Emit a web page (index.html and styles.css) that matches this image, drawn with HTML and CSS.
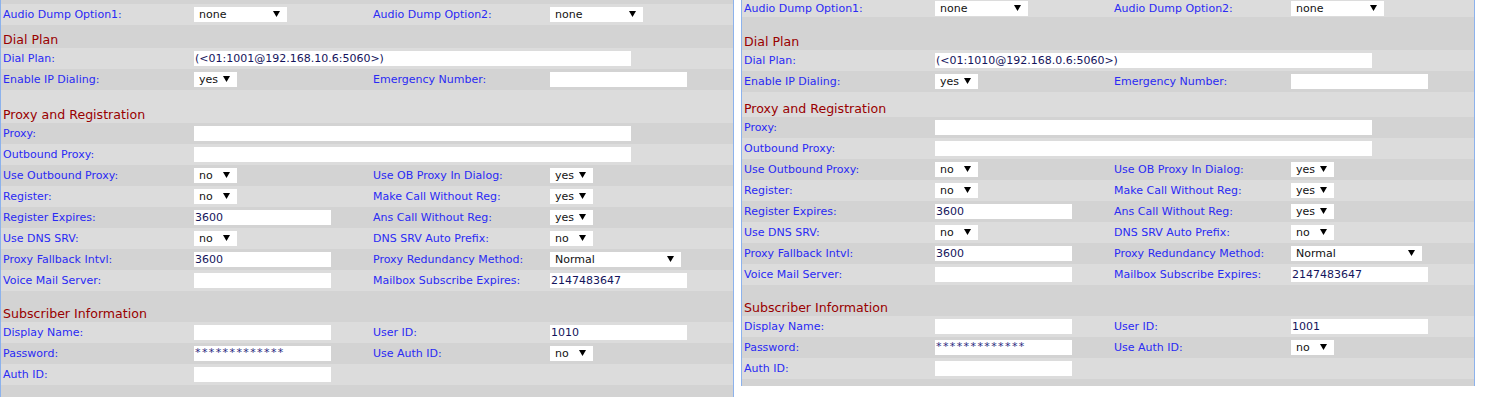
FILE: index.html
```html
<!DOCTYPE html>
<html>
<head>
<meta charset="utf-8">
<title>Ext</title>
<link rel="stylesheet" href="styles.css">
</head>
<body>
<div class="wrap">
  <!-- LEFT PANEL -->
  <div class="panel panel-left">
    <div class="row dark"></div>
    <div class="row light">
      <span class="lbl lbl1">Audio Dump Option1:</span>
      <span class="ctl"><span class="sel w93"><span>none</span><svg class="arr" viewBox="0 0 7 6"><polygon points="0,0 7,0 3.5,6"/></svg></span></span>
      <span class="lbl">Audio Dump Option2:</span>
      <span class="ctl"><span class="sel w93"><span>none</span><svg class="arr" viewBox="0 0 7 6"><polygon points="0,0 7,0 3.5,6"/></svg></span></span>
    </div>
    <div class="sect dark"><div class="hdr">Dial Plan</div></div>
    <div class="row light">
      <span class="lbl lbl1">Dial Plan:</span>
      <span class="ctl span3"><span class="inp wide">(&lt;01:1001@192.168.10.6:5060&gt;)</span></span>
    </div>
    <div class="row dark">
      <span class="lbl lbl1">Enable IP Dialing:</span>
      <span class="ctl"><span class="sel w43"><span>yes</span><svg class="arr" viewBox="0 0 7 6"><polygon points="0,0 7,0 3.5,6"/></svg></span></span>
      <span class="lbl">Emergency Number:</span>
      <span class="ctl"><span class="inp"></span></span>
    </div>
    <div class="sect light"><div class="sp10"></div><div class="hdr">Proxy and Registration</div></div>
    <div class="row dark">
      <span class="lbl lbl1">Proxy:</span>
      <span class="ctl span3"><span class="inp wide"></span></span>
    </div>
    <div class="row light">
      <span class="lbl lbl1">Outbound Proxy:</span>
      <span class="ctl span3"><span class="inp wide"></span></span>
    </div>
    <div class="row dark">
      <span class="lbl lbl1">Use Outbound Proxy:</span>
      <span class="ctl"><span class="sel w43"><span>no</span><svg class="arr" viewBox="0 0 7 6"><polygon points="0,0 7,0 3.5,6"/></svg></span></span>
      <span class="lbl">Use OB Proxy In Dialog:</span>
      <span class="ctl"><span class="sel w43"><span>yes</span><svg class="arr" viewBox="0 0 7 6"><polygon points="0,0 7,0 3.5,6"/></svg></span></span>
    </div>
    <div class="row light">
      <span class="lbl lbl1">Register:</span>
      <span class="ctl"><span class="sel w43"><span>no</span><svg class="arr" viewBox="0 0 7 6"><polygon points="0,0 7,0 3.5,6"/></svg></span></span>
      <span class="lbl">Make Call Without Reg:</span>
      <span class="ctl"><span class="sel w43"><span>yes</span><svg class="arr" viewBox="0 0 7 6"><polygon points="0,0 7,0 3.5,6"/></svg></span></span>
    </div>
    <div class="row dark">
      <span class="lbl lbl1">Register Expires:</span>
      <span class="ctl"><span class="inp">3600</span></span>
      <span class="lbl">Ans Call Without Reg:</span>
      <span class="ctl"><span class="sel w43"><span>yes</span><svg class="arr" viewBox="0 0 7 6"><polygon points="0,0 7,0 3.5,6"/></svg></span></span>
    </div>
    <div class="row light">
      <span class="lbl lbl1">Use DNS SRV:</span>
      <span class="ctl"><span class="sel w43"><span>no</span><svg class="arr" viewBox="0 0 7 6"><polygon points="0,0 7,0 3.5,6"/></svg></span></span>
      <span class="lbl">DNS SRV Auto Prefix:</span>
      <span class="ctl"><span class="sel w43"><span>no</span><svg class="arr" viewBox="0 0 7 6"><polygon points="0,0 7,0 3.5,6"/></svg></span></span>
    </div>
    <div class="row dark">
      <span class="lbl lbl1">Proxy Fallback Intvl:</span>
      <span class="ctl"><span class="inp">3600</span></span>
      <span class="lbl">Proxy Redundancy Method:</span>
      <span class="ctl"><span class="sel w131"><span>Normal</span><svg class="arr" viewBox="0 0 7 6"><polygon points="0,0 7,0 3.5,6"/></svg></span></span>
    </div>
    <div class="row light">
      <span class="lbl lbl1">Voice Mail Server:</span>
      <span class="ctl"><span class="inp"></span></span>
      <span class="lbl">Mailbox Subscribe Expires:</span>
      <span class="ctl"><span class="inp">2147483647</span></span>
    </div>
    <div class="sect dark"><div class="sp8"></div><div class="hdr">Subscriber Information</div></div>
    <div class="row light">
      <span class="lbl lbl1">Display Name:</span>
      <span class="ctl"><span class="inp"></span></span>
      <span class="lbl">User ID:</span>
      <span class="ctl"><span class="inp">1010</span></span>
    </div>
    <div class="row dark">
      <span class="lbl lbl1">Password:</span>
      <span class="ctl"><span class="inp pw">*************</span></span>
      <span class="lbl">Use Auth ID:</span>
      <span class="ctl"><span class="sel w43"><span>no</span><svg class="arr" viewBox="0 0 7 6"><polygon points="0,0 7,0 3.5,6"/></svg></span></span>
    </div>
    <div class="row light">
      <span class="lbl lbl1">Auth ID:</span>
      <span class="ctl"><span class="inp"></span></span>
    </div>
    <div class="tail dark tail-left"></div>
  </div>

  <!-- RIGHT PANEL -->
  <div class="panel panel-right">
    <div class="row row-top light">
      <span class="lbl lbl1">Audio Dump Option1:</span>
      <span class="ctl"><span class="sel w93"><span>none</span><svg class="arr" viewBox="0 0 7 6"><polygon points="0,0 7,0 3.5,6"/></svg></span></span>
      <span class="lbl">Audio Dump Option2:</span>
      <span class="ctl"><span class="sel w93"><span>none</span><svg class="arr" viewBox="0 0 7 6"><polygon points="0,0 7,0 3.5,6"/></svg></span></span>
    </div>
    <div class="sect dark"><div class="sp10"></div><div class="hdr">Dial Plan</div></div>
    <div class="row light">
      <span class="lbl lbl1">Dial Plan:</span>
      <span class="ctl span3"><span class="inp wide">(&lt;01:1010@192.168.0.6:5060&gt;)</span></span>
    </div>
    <div class="row dark">
      <span class="lbl lbl1">Enable IP Dialing:</span>
      <span class="ctl"><span class="sel w43"><span>yes</span><svg class="arr" viewBox="0 0 7 6"><polygon points="0,0 7,0 3.5,6"/></svg></span></span>
      <span class="lbl">Emergency Number:</span>
      <span class="ctl"><span class="inp"></span></span>
    </div>
    <div class="sect light"><div class="sp2"></div><div class="hdr">Proxy and Registration</div></div>
    <div class="row dark">
      <span class="lbl lbl1">Proxy:</span>
      <span class="ctl span3"><span class="inp wide"></span></span>
    </div>
    <div class="row light">
      <span class="lbl lbl1">Outbound Proxy:</span>
      <span class="ctl span3"><span class="inp wide"></span></span>
    </div>
    <div class="row dark">
      <span class="lbl lbl1">Use Outbound Proxy:</span>
      <span class="ctl"><span class="sel w43"><span>no</span><svg class="arr" viewBox="0 0 7 6"><polygon points="0,0 7,0 3.5,6"/></svg></span></span>
      <span class="lbl">Use OB Proxy In Dialog:</span>
      <span class="ctl"><span class="sel w43"><span>yes</span><svg class="arr" viewBox="0 0 7 6"><polygon points="0,0 7,0 3.5,6"/></svg></span></span>
    </div>
    <div class="row light">
      <span class="lbl lbl1">Register:</span>
      <span class="ctl"><span class="sel w43"><span>no</span><svg class="arr" viewBox="0 0 7 6"><polygon points="0,0 7,0 3.5,6"/></svg></span></span>
      <span class="lbl">Make Call Without Reg:</span>
      <span class="ctl"><span class="sel w43"><span>yes</span><svg class="arr" viewBox="0 0 7 6"><polygon points="0,0 7,0 3.5,6"/></svg></span></span>
    </div>
    <div class="row dark">
      <span class="lbl lbl1">Register Expires:</span>
      <span class="ctl"><span class="inp">3600</span></span>
      <span class="lbl">Ans Call Without Reg:</span>
      <span class="ctl"><span class="sel w43"><span>yes</span><svg class="arr" viewBox="0 0 7 6"><polygon points="0,0 7,0 3.5,6"/></svg></span></span>
    </div>
    <div class="row light">
      <span class="lbl lbl1">Use DNS SRV:</span>
      <span class="ctl"><span class="sel w43"><span>no</span><svg class="arr" viewBox="0 0 7 6"><polygon points="0,0 7,0 3.5,6"/></svg></span></span>
      <span class="lbl">DNS SRV Auto Prefix:</span>
      <span class="ctl"><span class="sel w43"><span>no</span><svg class="arr" viewBox="0 0 7 6"><polygon points="0,0 7,0 3.5,6"/></svg></span></span>
    </div>
    <div class="row dark">
      <span class="lbl lbl1">Proxy Fallback Intvl:</span>
      <span class="ctl"><span class="inp">3600</span></span>
      <span class="lbl">Proxy Redundancy Method:</span>
      <span class="ctl"><span class="sel w131"><span>Normal</span><svg class="arr" viewBox="0 0 7 6"><polygon points="0,0 7,0 3.5,6"/></svg></span></span>
    </div>
    <div class="row light">
      <span class="lbl lbl1">Voice Mail Server:</span>
      <span class="ctl"><span class="inp"></span></span>
      <span class="lbl">Mailbox Subscribe Expires:</span>
      <span class="ctl"><span class="inp">2147483647</span></span>
    </div>
    <div class="sect dark"><div class="sp8"></div><div class="hdr">Subscriber Information</div></div>
    <div class="row light">
      <span class="lbl lbl1">Display Name:</span>
      <span class="ctl"><span class="inp"></span></span>
      <span class="lbl">User ID:</span>
      <span class="ctl"><span class="inp">1001</span></span>
    </div>
    <div class="row dark">
      <span class="lbl lbl1">Password:</span>
      <span class="ctl"><span class="inp pw">*************</span></span>
      <span class="lbl">Use Auth ID:</span>
      <span class="ctl"><span class="sel w43"><span>no</span><svg class="arr" viewBox="0 0 7 6"><polygon points="0,0 7,0 3.5,6"/></svg></span></span>
    </div>
    <div class="row light">
      <span class="lbl lbl1">Auth ID:</span>
      <span class="ctl"><span class="inp"></span></span>
    </div>
    <div class="tail dark tail-right"></div>
  </div>
</div>
</body>
</html>
```

FILE: styles.css
```css
html, body {
  margin: 0;
  padding: 0;
  background: #ffffff;
  overflow: hidden;
}

body {
  font-family: Verdana, "DejaVu Sans", sans-serif;
  font-size: 11px;
}

.wrap {
  display: flex;
  align-items: flex-start;
  gap: 7px;
}

.panel {
  width: 734px;
  box-sizing: border-box;
  border-left: 1px solid #8cb2ec;
  border-right: 1px solid #8cb2ec;
  display: flex;
  flex-direction: column;
}

.panel-left {
  margin-top: -17px;
}

.panel-right {
  margin-top: 0;
}

.light { background: #dcdcdc; }
.dark { background: #d3d3d3; }

.row {
  display: grid;
  grid-template-columns: 193px 179px 177px 1fr;
  height: 21px;
  align-items: center;
}

.row.row-top {
  height: 17px;
}

.lbl {
  color: #2a2af4;
  white-space: nowrap;
  line-height: 14px;
}

.lbl1 {
  padding-left: 2px;
}

.ctl {
  display: flex;
  align-items: center;
}

.span3 {
  grid-column: span 3;
}

.sel {
  display: inline-flex;
  align-items: center;
  justify-content: space-between;
  box-sizing: border-box;
  height: 15px;
  background: #ffffff;
  color: #111111;
  padding: 0 7px 0 5px;
  line-height: 15px;
}

.w43 { width: 43px; }
.w93 { width: 93px; }
.w131 { width: 131px; }

.arr {
  width: 7px;
  height: 6px;
  fill: #000000;
  margin-bottom: 2px;
  flex: none;
}

.inp {
  display: inline-block;
  box-sizing: border-box;
  width: 137px;
  height: 15px;
  background: #ffffff;
  color: #14145c;
  padding-left: 1px;
  line-height: 15px;
  white-space: nowrap;
  overflow: hidden;
}

.inp.wide { width: 437px; }

.pw {
  color: #2a2a7e;
  font-size: 11px;
  line-height: 13px;
  letter-spacing: 1.4px;
}

.sect {
  display: flex;
  flex-direction: column;
}

.sp10 { height: 10px; }
.sp8 { height: 8px; }
.sp2 { height: 2px; }

.hdr {
  height: 23px;
  box-sizing: border-box;
  display: flex;
  align-items: flex-end;
  padding-left: 2px;
  color: #990000;
  font-size: 12.6px;
  line-height: 16px;
  white-space: nowrap;
}

.tail-left { height: 12px; }
.tail-right { height: 7px; }
```
